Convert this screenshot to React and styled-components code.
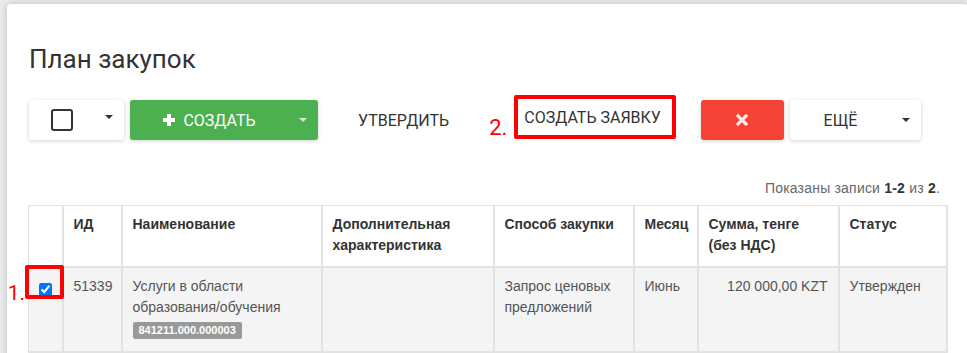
import React from 'react';
import styled, { createGlobalStyle } from 'styled-components';

const GlobalStyle = createGlobalStyle`
  html, body {
    margin: 0;
    padding: 0;
    background: #e9e9e9;
    overflow: hidden;
  }
  body {
    font-family: "Liberation Sans", Arial, sans-serif;
  }
`;

const Page = styled.div`
  padding: 4px 0 0 7px;
  height: 353px;
  box-sizing: border-box;
`;

const Card = styled.div`
  width: 961px;
  min-height: 400px;
  box-sizing: border-box;
  background: #fff;
  border-radius: 4px;
  box-shadow: 0 0 6px rgba(0, 0, 0, 0.18);
  padding: 40px 22px 0 22px;
`;

const Title = styled.h1`
  margin: 0;
  font-family: Roboto, "Liberation Sans", sans-serif;
  font-weight: 400;
  font-size: 26px;
  line-height: 31px;
  color: #333;
`;

const Toolbar = styled.div`
  display: flex;
  align-items: flex-start;
  margin-top: 25px;
  height: 40px;
  font-family: Roboto, "Liberation Sans", sans-serif;
`;

const Button = styled.div`
  display: flex;
  align-items: center;
  justify-content: center;
  box-sizing: border-box;
  height: 40px;
  width: ${(p) => (p.$width ? `${p.$width}px` : 'auto')};
  margin-left: ${(p) => p.$gap || 0}px;
  padding: ${(p) => (p.$pad != null ? `0 ${p.$pad}px` : '0')};
  border-radius: 3px;
  font-size: 16px;
  text-transform: uppercase;
  color: ${(p) => (p.$tone === 'success' || p.$tone === 'danger' ? '#fff' : '#333')};
  background: ${(p) =>
    p.$tone === 'success' ? '#4caf50' : p.$tone === 'danger' ? '#f44336' : p.$tone === 'flat' ? 'transparent' : '#fff'};
  box-shadow: ${(p) => (p.$tone === 'flat' ? 'none' : '0 1px 4px rgba(0, 0, 0, 0.18)')};
`;

const ButtonMain = styled.div`
  flex: 1;
  display: flex;
  align-items: center;
  justify-content: center;
  gap: 7px;
`;

const CaretPart = styled.div`
  width: 30px;
  display: flex;
  align-items: center;
  justify-content: center;
  align-self: stretch;
  padding-bottom: ${(p) => p.$lift || 0}px;
`;

const Caret = styled.span`
  width: 0;
  height: 0;
  border-left: 4px solid transparent;
  border-right: 4px solid transparent;
  border-top: 4px solid ${(p) => p.$color || '#333'};
`;

const Square = styled.span`
  width: 22px;
  height: 22px;
  box-sizing: border-box;
  border: 2px solid #333;
  border-radius: 3px;
`;

const Boxed = styled.div`
  display: flex;
  align-items: center;
  height: 44px;
  box-sizing: border-box;
  margin: -5px 0 0 7px;
  padding: 0 11px 0 6px;
  border: 4px solid #ff0000;
  border-radius: 2px;
  font-size: 16px;
  color: #333;
  text-transform: uppercase;
`;

const Mark = styled.span`
  font-family: Roboto, "Liberation Sans", sans-serif;
  font-size: 22px;
  line-height: 26px;
  color: #ff0000;
`;

const ToolbarMark = styled(Mark)`
  margin: 15px 0 0 4px;
`;

const Summary = styled.div`
  margin-top: 38px;
  padding-right: 6px;
  text-align: right;
  font-size: 14px;
  line-height: 20px;
  letter-spacing: 0.2px;
  color: #666;

  b {
    color: #333;
  }
`;

const Table = styled.table`
  margin: 7px 0 0 -1px;
  width: 918px;
  table-layout: fixed;
  border-collapse: collapse;
  font-size: 14px;
  line-height: 21px;
`;

const Th = styled.th`
  text-align: left;
  vertical-align: top;
  font-weight: 700;
  color: #333;
  padding: 8px 10px 10px 10px;
  border: 2px solid #e2e2e2;
  border-top: 1px solid #e2e2e2;
  &:first-child {
    border-left: 1px solid #e2e2e2;
  }
`;

const Tr = styled.tr`
  background: ${(p) => (p.$selected ? '#f4f4f4' : '#fff')};
`;

const Td = styled.td`
  vertical-align: top;
  color: #555;
  padding: 8px 10px 8px 10px;
  text-align: ${(p) => p.$align || 'left'};
  border-left: 2px solid #e2e2e2;
  border-right: 2px solid #e2e2e2;
  border-bottom: 2px solid #e2e2e2;
  &:first-child {
    border-left: 1px solid #e2e2e2;
  }
`;

const CheckCell = styled(Td)`
  position: relative;
  padding: 0;
`;

const Check = styled.input`
  display: block;
  width: 13px;
  height: 13px;
  margin: 15px 0 0 10px;
  accent-color: #0075ff;
`;

const CheckFrame = styled.span`
  position: absolute;
  left: -4px;
  top: -3px;
  width: 39px;
  height: 34px;
  box-sizing: border-box;
  border: 4px solid #ff0000;
  border-radius: 2px;
`;

const RowMark = styled(Mark)`
  position: absolute;
  right: calc(100% + 4px);
  top: 12px;
  font-size: 21px;
`;

const Badge = styled.span`
  display: inline-block;
  margin: 4px 0 4px;
  padding: 2px 6px;
  border-radius: 2px;
  background: #999;
  color: #fff;
  font-size: 11px;
  line-height: 13px;
  font-weight: 700;
`;

const Times = () => (
  <svg width="12" height="12" viewBox="0 0 12 12">
    <path d="M2 2 L10 10 M10 2 L2 10" stroke="#fde4e2" strokeWidth="3.2" strokeLinecap="square" />
  </svg>
);

const Plus = () => (
  <svg width="14" height="14" viewBox="0 0 14 14">
    <path d="M7 1 V13 M1 7 H13" stroke="#fff" strokeWidth="4" />
  </svg>
);

const columns = [
  { w: 34, title: '' },
  { w: 59, title: 'ИД' },
  { w: 200, title: 'Наименование' },
  { w: 172, title: 'Дополнительная характеристика' },
  { w: 140, title: 'Способ закупки' },
  { w: 64, title: 'Месяц' },
  { w: 141, title: 'Сумма, тенге (без НДС)' },
  { w: 108, title: 'Статус' },
];

const rows = [
  {
    id: '51339',
    name: 'Услуги в области образования/обучения',
    code: '841211.000.000003',
    extra: '',
    method: 'Запрос ценовых предложений',
    month: 'Июнь',
    sum: '120 000,00 KZT',
    status: 'Утвержден',
    selected: true,
  },
];

export default function App() {
  return (
    <Page>
      <GlobalStyle />
      <Card>
        <Title>План закупок</Title>
        <Toolbar>
          <Button $width={95}>
            <ButtonMain>
              <Square />
            </ButtonMain>
            <CaretPart $lift={7}>
              <Caret />
            </CaretPart>
          </Button>
          <Button $tone="success" $width={188} $gap={6}>
            <ButtonMain>
              <Plus />
              Создать
            </ButtonMain>
            <CaretPart>
              <Caret $color="rgba(255,255,255,0.75)" />
            </CaretPart>
          </Button>
          <Button $tone="flat" $pad={36} $gap={4}>
            Утвердить
          </Button>
          <ToolbarMark>2.</ToolbarMark>
          <Boxed>Создать заявку</Boxed>
          <Button $tone="danger" $width={83} $gap={25}>
            <Times />
          </Button>
          <Button $width={131} $gap={6}>
            <ButtonMain>Ещё</ButtonMain>
            <CaretPart>
              <Caret />
            </CaretPart>
          </Button>
        </Toolbar>
        <Summary>
          Показаны записи <b>1-2</b> из <b>2</b>.
        </Summary>
        <Table>
          <colgroup>
            {columns.map((c, i) => (
              <col key={i} style={{ width: c.w }} />
            ))}
          </colgroup>
          <thead>
            <tr>
              {columns.map((c, i) => (
                <Th key={i}>{c.title}</Th>
              ))}
            </tr>
          </thead>
          <tbody>
            {rows.map((r) => (
              <Tr key={r.id} $selected={r.selected}>
                <CheckCell>
                  <Check type="checkbox" defaultChecked={r.selected} />
                  {r.selected && <CheckFrame />}
                  {r.selected && <RowMark>1.</RowMark>}
                </CheckCell>
                <Td>{r.id}</Td>
                <Td>
                  {r.name}
                  <br />
                  <Badge>{r.code}</Badge>
                </Td>
                <Td>{r.extra}</Td>
                <Td>{r.method}</Td>
                <Td>{r.month}</Td>
                <Td $align="right">{r.sum}</Td>
                <Td>{r.status}</Td>
              </Tr>
            ))}
            <Tr>
              {columns.map((c, i) => (
                <Td key={i}>&nbsp;</Td>
              ))}
            </Tr>
          </tbody>
        </Table>
      </Card>
    </Page>
  );
}
